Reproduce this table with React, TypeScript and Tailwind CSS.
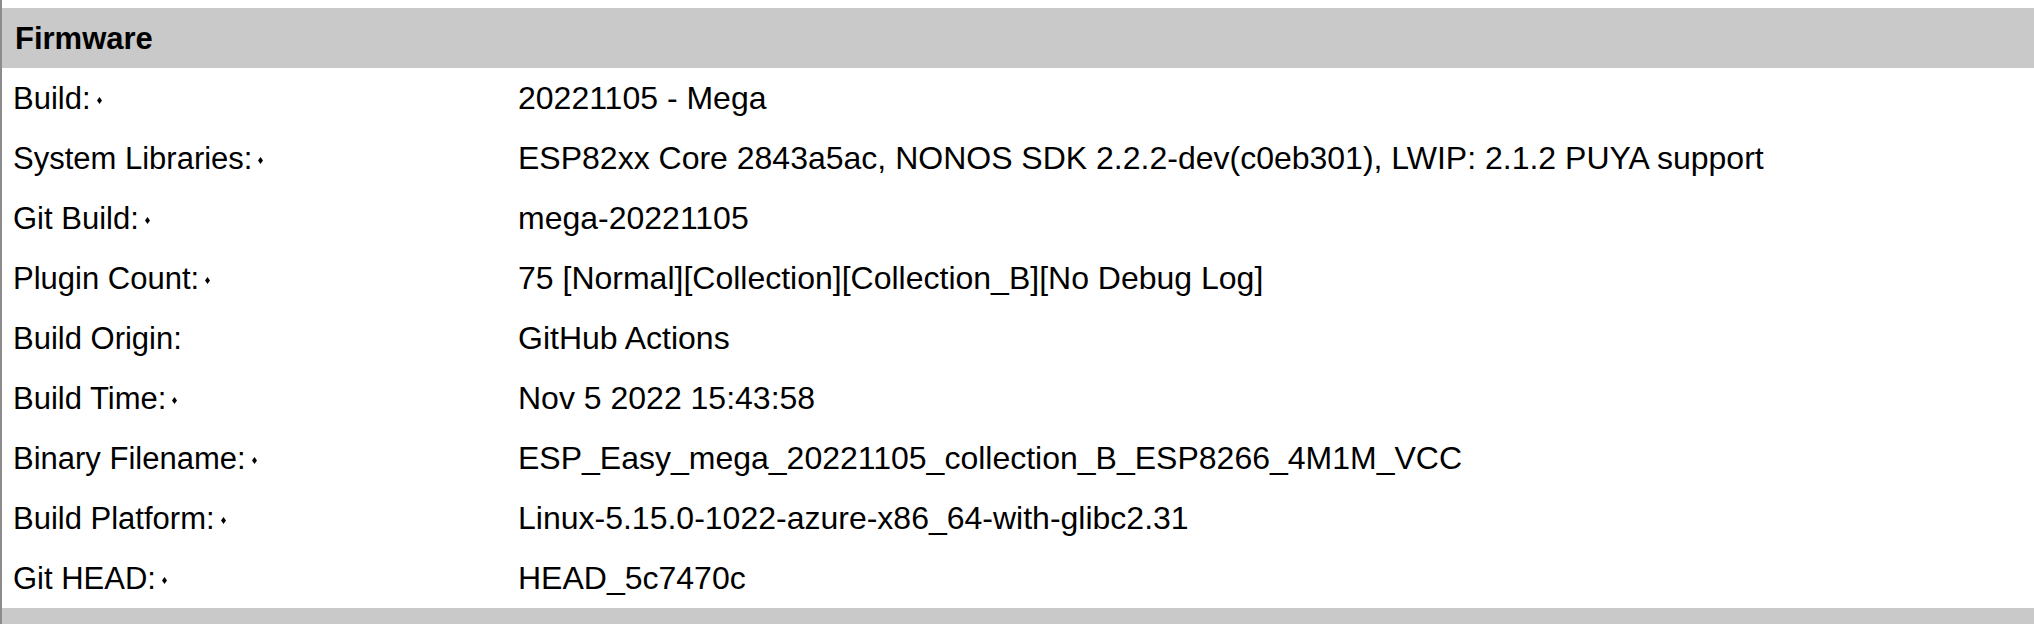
import React from "react";

const rows: { label: string; value: string; mark: boolean }[] = [
  { label: "Build:", value: "20221105 - Mega", mark: true },
  { label: "System Libraries:", value: "ESP82xx Core 2843a5ac, NONOS SDK 2.2.2-dev(c0eb301), LWIP: 2.1.2 PUYA support", mark: true },
  { label: "Git Build:", value: "mega-20221105", mark: true },
  { label: "Plugin Count:", value: "75 [Normal][Collection][Collection_B][No Debug Log]", mark: true },
  { label: "Build Origin:", value: "GitHub Actions", mark: false },
  { label: "Build Time:", value: "Nov 5 2022 15:43:58", mark: true },
  { label: "Binary Filename:", value: "ESP_Easy_mega_20221105_collection_B_ESP8266_4M1M_VCC", mark: true },
  { label: "Build Platform:", value: "Linux-5.15.0-1022-azure-x86_64-with-glibc2.31", mark: true },
  { label: "Git HEAD:", value: "HEAD_5c7470c", mark: true },
];

function Mark() {
  return (
    <svg width="5" height="7" viewBox="0 0 5 7" className="ml-[6px] mt-[4px] shrink-0">
      <path d="M2.5 0 L5 3.5 L2.5 7 L0 3.5 Z" fill="#000" />
    </svg>
  );
}

export default function App() {
  return (
    <div
      className="w-[2034px] h-[624px] bg-white overflow-hidden flex text-black"
      style={{ fontFamily: '"Liberation Sans", Arial, sans-serif' }}
    >
      <div className="w-[2px] h-full bg-[#8c8c8c] shrink-0" />
      <div className="flex-1 flex flex-col pt-[8px]">
        <div className="h-[60px] shrink-0 bg-[#c9c9c9] flex items-center pl-[13px] font-bold text-[31px] leading-none">
          Firmware
        </div>
        {rows.map((r) => (
          <div key={r.label} className="h-[60px] shrink-0 grid grid-cols-[506px_1fr] items-center leading-none">
            <div className="pl-[11px] flex items-center text-[31px]">
              <span>{r.label}</span>
              {r.mark && <Mark />}
            </div>
            <div className="pl-[10px] whitespace-nowrap text-[32px]">{r.value}</div>
          </div>
        ))}
        <div className="h-[60px] shrink-0 bg-[#c9c9c9]" />
      </div>
    </div>
  );
}
